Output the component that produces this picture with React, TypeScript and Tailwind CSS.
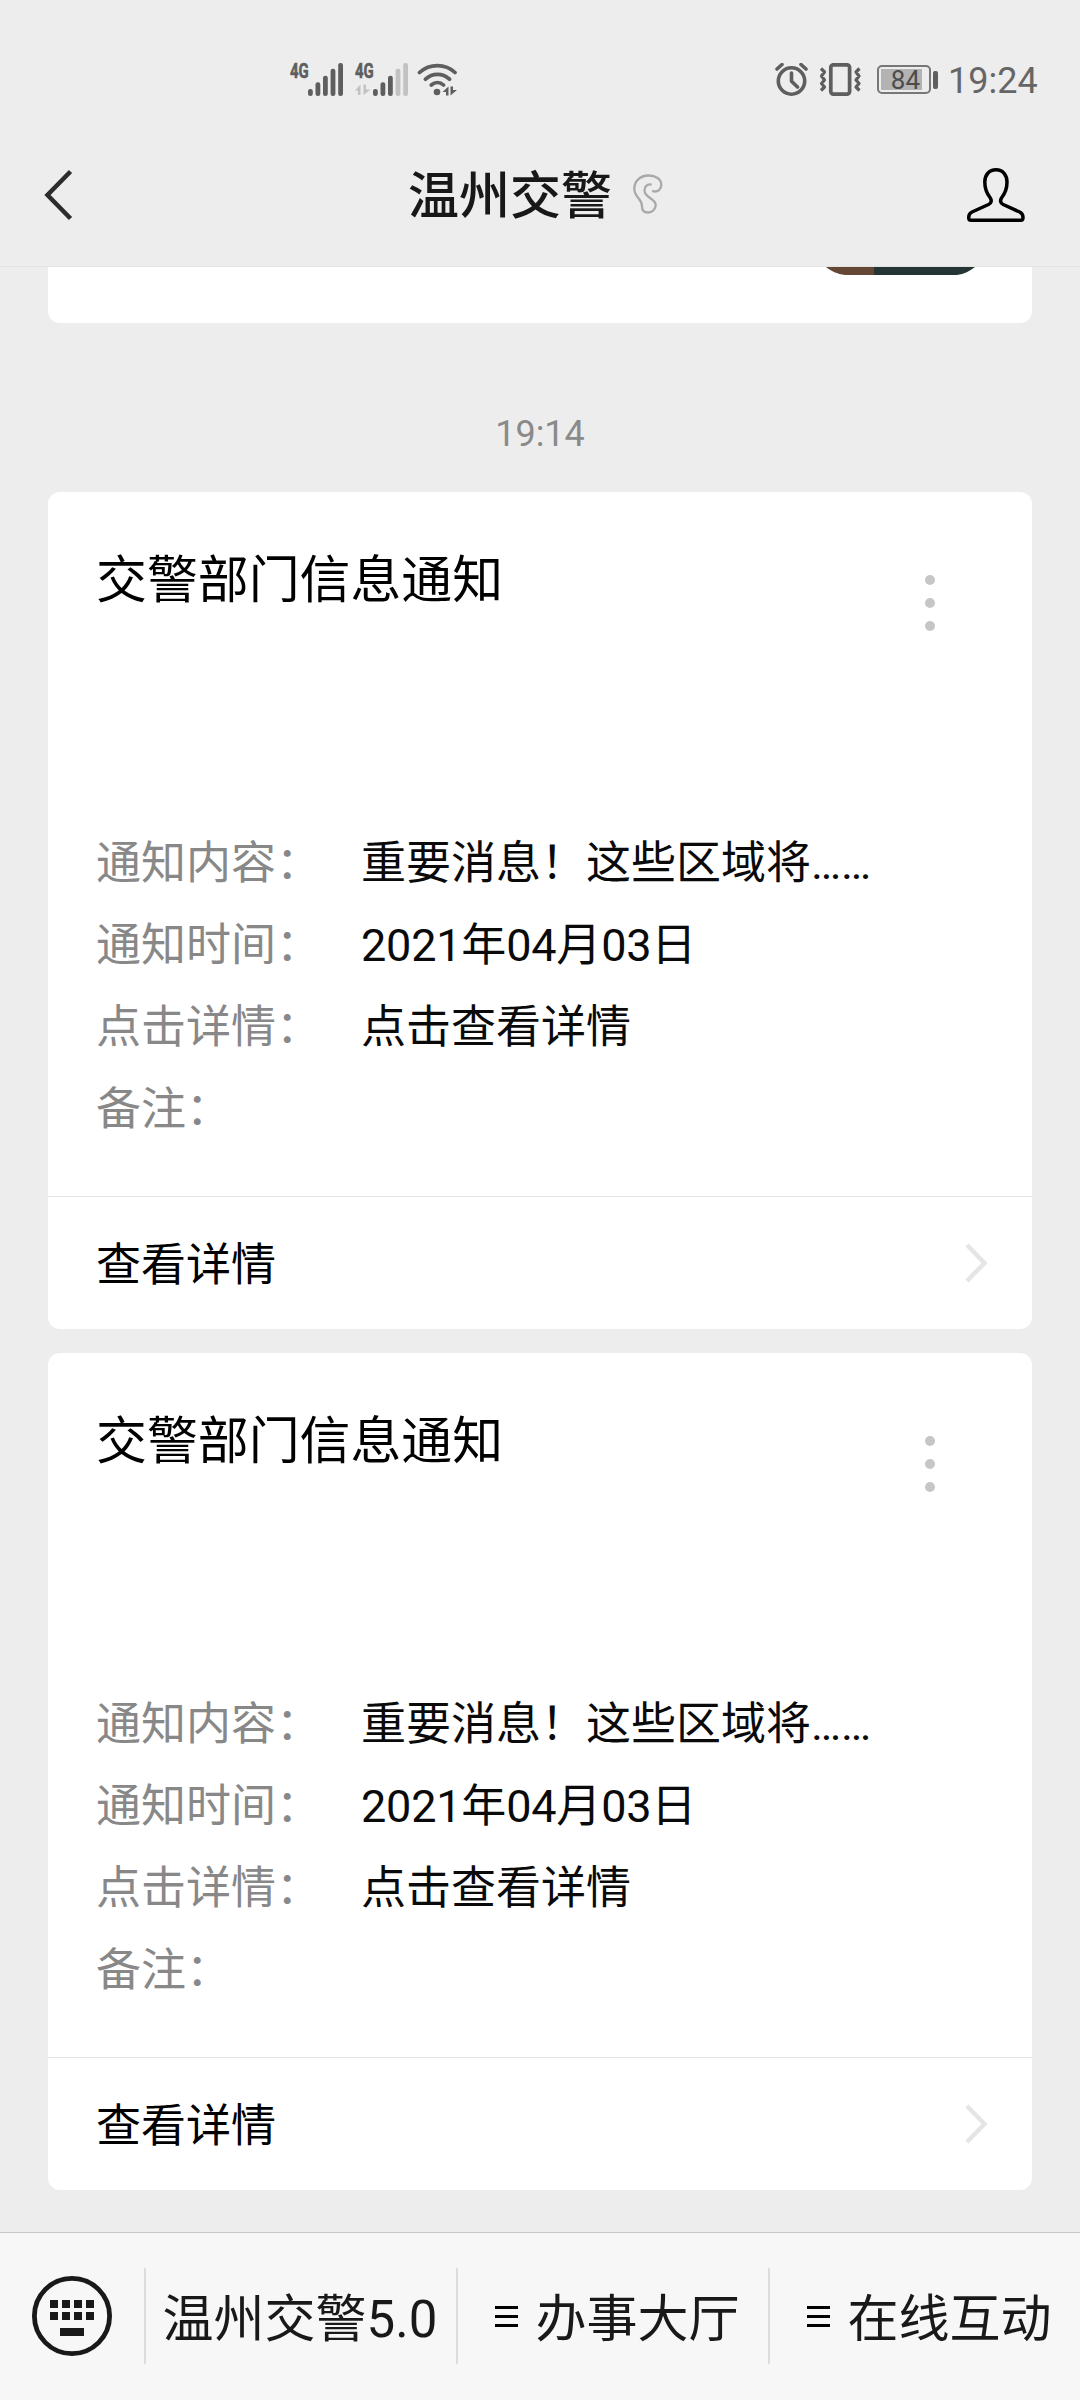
import type { ReactNode } from 'react'

const notices = [
  { id: 1, title: '交警部门信息通知' },
  { id: 2, title: '交警部门信息通知' },
]

const rows = [
  { label: '通知内容：', value: '重要消息！这些区域将……', tracking: 'tracking-normal' },
  { label: '通知时间：', value: '2021年04月03日', tracking: 'tracking-[-0.2px]' },
  { label: '点击详情：', value: '点击查看详情', tracking: 'tracking-normal' },
  { label: '备注：', value: '', tracking: 'tracking-normal' },
]

const bars = [
  { x: 18, y: 26, h: 7 },
  { x: 25.5, y: 19.3, h: 13.7 },
  { x: 33, y: 12.7, h: 20.3 },
  { x: 40.6, y: 5.7, h: 27.3 },
  { x: 48.2, y: 0, h: 33 },
]

function Signal({ level, arrows }: { level: number; arrows?: boolean }) {
  return (
    <svg width="53" height="33" viewBox="0 0 53 33" className="shrink-0 overflow-visible">
      <text
        x="0"
        y="15"
        fontSize="21"
        fontWeight="700"
        textLength="26"
        lengthAdjust="spacingAndGlyphs"
        transform="scale(0.72 1)"
        fill="#5e5e5e"
        stroke="#5e5e5e"
        strokeWidth="0.6"
      >
        4G
      </text>
      {arrows && <path d="M0 27.5 5.5 21.5V32H3V27.5ZM8.5 21.5H11V26.5H15.5L8.5 32Z" fill="#c2c2c2" />}
      {bars.map((b, i) => (
        <rect key={b.x} x={b.x} y={b.y} width="4.8" height={b.h} rx="2.2" fill={i < level ? '#5e5e5e' : '#c2c2c2'} />
      ))}
    </svg>
  )
}

function StatusBar() {
  return (
    <div className="flex h-[96px] items-end pl-[290px] text-[#5e5e5e]">
      <Signal level={5} />
      <div className="w-[12px]" />
      <Signal level={3} arrows />
      <svg width="40" height="33" viewBox="0 0 40 33" className="ml-[9px] shrink-0" fill="none" stroke="currentColor" strokeWidth="3.7" strokeLinecap="round">
        <path d="M2.5 9.5C12.5 0.2 28.5 0.2 38 9.5M8.5 16.2C15.5 9.7 25.5 9.7 32.5 16.2M14.3 22C18 18.8 23 18.8 26.5 22" />
        <circle cx="20" cy="29" r="3.3" fill="currentColor" stroke="none" />
        <path d="M25.5 29 31.5 23.5V32.5H29V29ZM33.5 23.5H36V27H40L33.5 32.5Z" fill="currentColor" stroke="none" />
      </svg>
      <svg width="33" height="33" viewBox="0 0 33 33" className="ml-[318px] shrink-0" fill="none" stroke="currentColor" strokeWidth="3.6">
        <circle cx="16.5" cy="18" r="13.2" />
        <path d="M16.5 10V18.2L22.5 24M2 6 7 1.5M31 6 26 1.5" strokeLinecap="round" strokeLinejoin="round" />
      </svg>
      <svg width="44" height="33" viewBox="0 0 44 33" className="ml-[11px] shrink-0" fill="none" stroke="currentColor">
        <rect x="11.8" y="1.8" width="18.8" height="29.4" rx="2.6" strokeWidth="3.7" />
        <path d="M2 5.5 5.5 9 2.5 13 5.5 17 2.5 20.5 5.5 24 2 27.5M40.5 5.5 37 9 40 13 37 17 40 20.5 37 24 40.5 27.5" strokeWidth="3.2" strokeLinejoin="round" />
      </svg>
      <div className="mb-[2px] ml-[14px] flex h-[29px] items-center">
        <div className="flex h-[29px] w-[54px] rounded-[5px] border-2 border-[#777] p-[2px]">
          <div className="flex w-[41px] items-center justify-end bg-[#b3b3b3] pt-px pr-[2px] text-[26px] leading-none text-[#4c4c4c]">84</div>
        </div>
        <div className="ml-[2px] h-[18px] w-[5px] rounded-[2px] bg-[#5e5e5e]" />
      </div>
      <span className="-mb-[4px] ml-[10px] text-[36px] leading-[38px] text-[#666]">19:24</span>
    </div>
  )
}

function Header() {
  return (
    <header className="flex h-[171px] items-start border-b border-[#e3e3e3]">
      <svg width="30" height="54" viewBox="0 0 30 54" className="mt-[72px] ml-[44px]" fill="none" stroke="#2c2c2c" strokeWidth="4.5">
        <path d="M26.5 3.5 3.5 27 26.5 50.5" />
      </svg>
      <div className="ml-[334px] flex items-center pt-[63px]">
        <h1 className="text-[51px] leading-[76px] font-medium text-[#181818]">温州交警</h1>
        <svg width="30" height="40" viewBox="0 0 30 40" className="-mt-[6px] ml-[21px]" fill="none" stroke="#a9a9a9" strokeWidth="2.3" strokeLinecap="round">
          <path d="M20 17.2C25 18.6 28.3 15 28.3 10.7 28.3 5 22.5 1.5 15.5 1.5 7 1.5 1.3 7.5 1.3 14.5 1.3 24 9 24 9 32.5 9 36.5 11.5 38.5 15 38.5 19.5 38.5 22.7 35 22.7 31 22.7 24.5 11.5 24 11.5 16.5 11.5 12.5 14 10.2 17.7 10.5" />
        </svg>
      </div>
      <svg width="60" height="56" viewBox="0 0 60 56" className="mt-[71px] mr-[54px] ml-auto" fill="none" stroke="#000" strokeWidth="3.5" strokeLinejoin="round">
        <path d="M30 2.8C23 2.8 18.8 8 18.8 15 18.8 22 20.5 26 24 30.5 26 33.5 25.5 36 22.5 37.5L6 45C3.5 46.2 2.7 48 2.7 50.5 2.7 52.5 3.3 53.3 5 53.3H54.7C56.4 53.3 57 52.5 57 50.5 57 48 56 46.2 53.7 45L37.2 37.5C34.3 36 33.8 33.5 35.8 30.5 39.3 26 41 22 41 15 41 8 37 2.8 30 2.8Z" />
      </svg>
    </header>
  )
}

function NoticeCard({ title }: { title: string }) {
  return (
    <article className="h-[837px] rounded-[12px] bg-white">
      <div className="flex h-[705px] flex-col border-b border-[#e3e3e3] px-[48px]">
        <div className="flex h-[331px] items-start justify-between">
          <h2 className="pt-[51px] text-[50.9px] leading-[76px] text-black">{title}</h2>
          <div className="mt-[83px] mr-[49px] flex flex-col gap-[13px]">
            <i className="size-[10px] rounded-full bg-[#c6c6c6]" />
            <i className="size-[10px] rounded-full bg-[#c6c6c6]" />
            <i className="size-[10px] rounded-full bg-[#c6c6c6]" />
          </div>
        </div>
        {rows.map((row) => (
          <div key={row.label} className="flex h-[82px] items-center text-[45px] leading-[66px]">
            <span className="w-[265px] text-[#888]">{row.label}</span>
            <span className={`text-[#0a0a0a] ${row.tracking}`}>{row.value}</span>
          </div>
        ))}
      </div>
      <div className="flex h-[132px] items-center justify-between pr-[44px] pl-[48px]">
        <span className="pt-[6px] text-[45px] leading-[66px] text-black">查看详情</span>
        <svg width="24" height="42" viewBox="0 0 24 42" fill="none" stroke="#e5e5e5" strokeWidth="4.5">
          <path d="M3 3 20.5 21 3 39" />
        </svg>
      </div>
    </article>
  )
}

function Tab({ children, menu }: { children: ReactNode; menu?: boolean }) {
  return (
    <div className={`flex h-[96px] w-[312px] items-center justify-center border-l-2 border-[#dcdcdc] ${menu ? 'pl-[9px]' : 'pr-[2px]'}`}>
      {menu && (
        <div className="mr-[17px] flex flex-col gap-[6px]">
          <i className="h-[3px] w-[23px] bg-black" />
          <i className="h-[3px] w-[23px] bg-black" />
          <i className="h-[3px] w-[23px] bg-black" />
        </div>
      )}
      <span className="pt-[7px] text-[51px] leading-[76px] whitespace-nowrap text-[#191919]">{children}</span>
    </div>
  )
}

export default function App() {
  return (
    <div className="flex h-[2400px] w-[1080px] flex-col overflow-hidden bg-[#ededed] font-['Roboto','Noto_Sans_CJK_SC',sans-serif]">
      <StatusBar />
      <Header />
      <main className="flex-1 px-[48px]">
        {/* tail of the previous message, scrolled under the header */}
        <div className="flex h-[56px] justify-end rounded-b-[12px] bg-white pr-[56px]">
          <svg width="150" height="8" viewBox="0 0 150 8">
            <path d="M0 0H48V8H19C11 7 5 4 0 0Z" fill="#644735" />
            <path d="M48 0H149C144 4 138 7 131 8H48Z" fill="#253434" />
          </svg>
        </div>
        <div className="flex h-[169px] items-center justify-center pt-[52px] text-[36px] leading-none text-[#8a8a8a]">
          19:14
        </div>
        <div className="flex flex-col gap-[24px]">
          {notices.map((n) => (
            <NoticeCard key={n.id} title={n.title} />
          ))}
        </div>
      </main>
      <footer className="flex h-[168px] items-start border-t border-[#c8c8c8] bg-[#f7f7f7] pt-[35px]">
        <svg width="80" height="80" viewBox="0 0 80 80" className="mt-[8px] mr-[32px] ml-[32px] shrink-0" fill="#191919">
          <circle cx="40" cy="40" r="37.6" fill="none" stroke="#191919" strokeWidth="4.8" />
          <path d="M18 24h8v8h-8zM30 24h8v8h-8zM42 24h8v8h-8zM54 24h8v8h-8zM18 36h8v8h-8zM30 36h8v8h-8zM42 36h8v8h-8zM54 36h8v8h-8zM28 52h24v8H28z" />
        </svg>
        <Tab>温州交警5.0</Tab>
        <Tab menu>办事大厅</Tab>
        <Tab menu>在线互动</Tab>
      </footer>
    </div>
  )
}
